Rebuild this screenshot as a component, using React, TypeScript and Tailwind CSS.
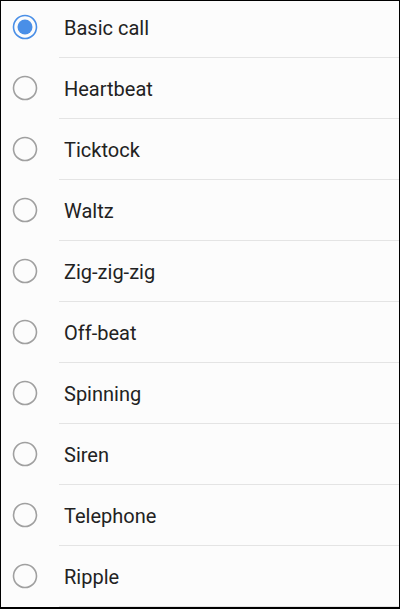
const items = [
  "Basic call",
  "Heartbeat",
  "Ticktock",
  "Waltz",
  "Zig-zig-zig",
  "Off-beat",
  "Spinning",
  "Siren",
  "Telephone",
  "Ripple",
];

function Radio({ checked }: { checked: boolean }) {
  return (
    <svg width="26" height="26" viewBox="0 0 26 26">
      <circle
        cx="13"
        cy="13"
        r="11.5"
        fill="none"
        stroke={checked ? "#4a8fe7" : "#a0a0a0"}
        strokeWidth="1.6"
      />
      {checked && <circle cx="13" cy="13" r="7.5" fill="#4a8fe7" />}
    </svg>
  );
}

export default function App() {
  return (
    <div
      className="h-[609px] w-[400px] overflow-hidden border-x border-t border-b-2 border-black bg-[#fcfcfc]"
      style={{ fontFamily: "Roboto, 'Noto Sans', sans-serif" }}
    >
      <div className="-mt-[4px]">
        {items.map((label, i) => (
          <div key={label}>
            <div className="flex h-[60px] items-center">
              <div className="flex w-[63px] justify-center pr-[15px]">
                <Radio checked={i === 0} />
              </div>
              <span className="pt-[2px] text-[20px] text-[#222222]">{label}</span>
            </div>
            <div className="ml-[58px] h-px bg-[#e4e4e4]" />
          </div>
        ))}
      </div>
    </div>
  );
}
